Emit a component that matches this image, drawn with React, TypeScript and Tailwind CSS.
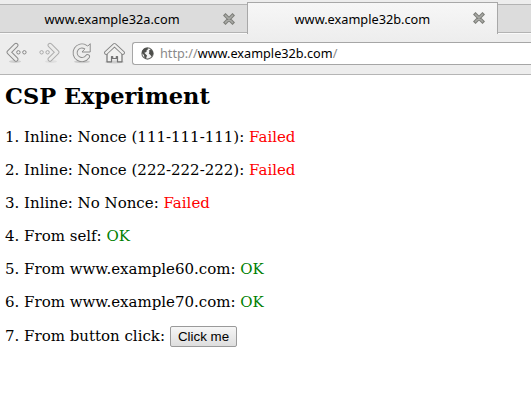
import React from "react";

const ui = "font-['Noto_Sans','DejaVu_Sans',sans-serif]";

function Close() {
  return (
    <svg width="12" height="12" viewBox="0 0 12 12" className="shrink-0">
      <path d="M2.5 2.5 9.5 9.5M9.5 2.5 2.5 9.5" stroke="#7d7e79" strokeWidth="3.6" strokeLinecap="square" strokeLinejoin="round" />
      <path d="M2.5 2.5 9.5 9.5M9.5 2.5 2.5 9.5" stroke="#a9aaa6" strokeWidth="1.7" strokeLinecap="round" />
    </svg>
  );
}

function Back() {
  return (
    <>
      <path d="M10 3.3 L3 10.3 L10 17.3" fill="none" stroke="#8a8a8a" strokeWidth="4.8" strokeLinecap="round" strokeLinejoin="round" />
      <path d="M10 3.3 L3 10.3 L10 17.3" fill="none" stroke="#ececeb" strokeWidth="3" strokeLinecap="round" strokeLinejoin="round" />
      <circle cx="12.4" cy="10.3" r="1.7" fill="#f0f0f0" stroke="#858585" />
      <circle cx="18.4" cy="10.3" r="1.7" fill="#f0f0f0" stroke="#858585" />
    </>
  );
}

function NavIcons() {
  return (
    <div className="flex shrink-0 items-start">
      <svg width="22" height="24" viewBox="0 0 22 24" className="ml-[6px]">
        <ellipse cx="9" cy="19.5" rx="6" ry="1.5" fill="#cfcfcf" />
        <Back />
      </svg>
      <svg width="22" height="24" viewBox="0 0 22 24" className="ml-[10px]">
        <ellipse cx="13" cy="19.5" rx="6" ry="1.5" fill="#dfdfdf" />
        <g transform="translate(22 0) scale(-1 1)" opacity="0.65">
          <Back />
        </g>
      </svg>
      <svg width="22" height="24" viewBox="0 0 22 24" className="ml-[11px]">
        <ellipse cx="11" cy="19.8" rx="8" ry="1.5" fill="#cdcdcd" />
        <path d="M16.5 14.6 A6.8 6.8 0 1 1 14.5 5" fill="none" stroke="#8a8a8a" strokeWidth="5" strokeLinecap="round" />
        <path d="M19.2 1.7 V10 H11 L13.4 7.4 L16.4 4.5 Z" fill="#f1f1f0" stroke="#8a8a8a" strokeLinejoin="round" />
        <path d="M16.5 14.6 A6.8 6.8 0 1 1 14.5 5 L16.5 6.4" fill="none" stroke="#ececeb" strokeWidth="3.2" strokeLinecap="round" strokeLinejoin="round" />
      </svg>
      <svg width="23" height="24" viewBox="0 0 23 24" className="ml-[11px]">
        <ellipse cx="10.5" cy="20" rx="9.5" ry="1.5" fill="#cdcdcd" />
        <path d="M3 10 L10.5 4 L18 10 V19.8 H13.5 V14.5 H12.3 V16.5 H8.7 V14.5 H7.5 V19.8 H3 Z" fill="#f1f1f0" stroke="#747474" strokeWidth="1.2" strokeLinejoin="round" />
        <path d="M2.1 10.8 L10.5 3 L18.9 10.8" fill="none" stroke="#858585" strokeWidth="4" strokeLinecap="round" strokeLinejoin="round" />
        <path d="M2.1 10.8 L10.5 3 L18.9 10.8" fill="none" stroke="#efefee" strokeWidth="2.3" strokeLinecap="round" strokeLinejoin="round" />
      </svg>
    </div>
  );
}

function Globe() {
  return (
    <svg width="13" height="13" viewBox="0 0 13 13" className="shrink-0">
      <circle cx="6.5" cy="6.5" r="5.6" fill="#f2f2f2" stroke="#6a6b68" strokeWidth="1.1" />
      <path d="M1 4 L3 1.5 6.5.8 7 2.2 5.5 3.4 5.6 4.8 4.2 5.6 3.3 5.7 4.7 7.3 6 8.5 5.4 10.5 4.8 12 3.4 10.4 3 8 1 6.3Z M8 3.4 10 2.3 12 4.8 12.3 7.2 10.4 9.8 9.5 8 7.8 6.6 8.4 5Z" fill="#4d4e4b" />
    </svg>
  );
}

const rows = [
  ["1. Inline: Nonce (111-111-111):", "Failed"],
  ["2. Inline: Nonce (222-222-222):", "Failed"],
  ["3. Inline: No Nonce:", "Failed"],
  ["4. From self:", "OK"],
  ["5. From www.example60.com:", "OK"],
  ["6. From www.example70.com:", "OK"],
];

export default function App() {
  return (
    <div className="flex h-[402px] w-[531px] flex-col overflow-hidden bg-white text-black">
      <div className={`flex h-[42px] shrink-0 bg-[#ededed] text-[12.75px] leading-[16px] ${ui}`}>
        <div className="mt-[4px] flex h-[29px] w-[247px] items-center border-y border-[#b3b3b3] bg-[#dcdcdc] pl-[44.6px] shadow-[0_1px_0_#fafafa]">
          <span className="w-[178.4px] pt-px">www.example32a.com</span>
          <Close />
        </div>
        <div className="relative mt-[2px] flex h-[40px] w-[251px] rounded-t-[4px] border-x border-t border-[#a8a8a8] bg-gradient-to-b from-[#f7f7f7] to-[#ededed] bg-origin-border pl-[46.6px] [border-image:linear-gradient(to_bottom,#a8a8a8_31px,#ededed_31px)_1]">
          <span className="w-[178.4px] pt-[8px]">www.example32b.com</span>
          <div className="pt-[9px]"><Close /></div>
        </div>
        <div className="mt-[4px] h-[29px] flex-1 border-y border-[#b3b3b3] bg-[#dcdcdc] shadow-[0_1px_0_#fafafa]" />
      </div>
      <div className={`flex h-[33px] shrink-0 border-b border-[#b5b5b5] bg-[#ededed] ${ui}`}>
        <NavIcons />
        <div className="ml-[5px] flex h-[23px] flex-1 items-center rounded-l-[3px] border-y border-l border-[#a6a6a6] bg-white pl-[8px] text-[12.7px]">
          <Globe />
          <span className="ml-[6px] whitespace-pre text-[#8a8a8a]">http://<span className="text-black">www.example32b.com</span>/</span>
        </div>
      </div>
      <main className="flex-1 pl-[5px] pt-[8px] font-['DejaVu_Serif',serif] text-[15px] leading-[18px]">
        <h2 className="mb-[18px] text-[22.5px] font-bold leading-[27px]">CSP Experiment</h2>
        {rows.map(([label, result]) => (
          <p key={label} className="mb-[15px]">
            {label} <span className={result === "OK" ? "text-[#008000]" : "text-[#ff0000]"}>{result}</span>
          </p>
        ))}
        <p className="flex items-start">
          <span className="pt-px">7. From button click:</span>
          <button className="ml-[5px] h-[21px] w-[67px] rounded-[2px] border border-[#9a9a9a] bg-gradient-to-b from-[#f6f6f6] to-[#dedede] font-['Liberation_Sans',sans-serif] text-[13.33px] leading-[18px]">Click me</button>
        </p>
      </main>
    </div>
  );
}
